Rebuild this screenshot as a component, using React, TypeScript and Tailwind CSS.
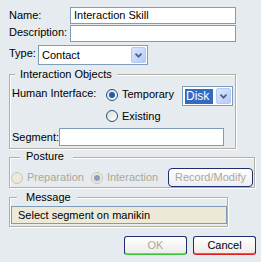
import React from "react";

function Chevron() {
  return (
    <svg width="15" height="16" viewBox="0 0 15 16">
      <path d="M4 6.5 L7.5 10 L11 6.5" fill="none" stroke="#4d6185" strokeWidth="2" />
    </svg>
  );
}

function DropBtn() {
  return (
    <div className="w-[15px] h-[16px] rounded-[2px] bg-gradient-to-br from-[#dbe6fd] to-[#b6cbf7] border border-[#b6c9f2] flex items-center justify-center">
      <Chevron />
    </div>
  );
}

function Radio({ checked, disabled, x }: { checked?: boolean; disabled?: boolean; x?: string }) {
  return (
    <div
      className={
        "w-[12px] h-[12px] rounded-full border flex items-center justify-center shrink-0 " +
        (disabled ? "border-[#c9c7ba] bg-[#ece9d8] " : "border-[#1c5180] bg-gradient-to-br from-[#dcdcd6] to-white ") +
        (x ?? "")
      }
    >
      {checked && (
        <div className={"w-[6px] h-[6px] rounded-full " + (disabled ? "bg-[#8a9bbf]" : "bg-[#2d58a8]")} />
      )}
    </div>
  );
}

function Group({
  legend,
  w,
  h,
  legendPos,
  children,
}: {
  legend: string;
  w: string;
  h: string;
  legendPos: string;
  children: React.ReactNode;
}) {
  return (
    <div
      className={
        "relative box-border border border-[#b3b0a3] shadow-[1px_1px_0_#fff,inset_1px_1px_0_#fff] " + w + " " + h
      }
    >
      <span className={"absolute -top-[7px] leading-[13px] bg-[#e5ebef] whitespace-nowrap " + legendPos}>{legend}</span>
      {children}
    </div>
  );
}

export default function App() {
  return (
    <div className="w-[261px] h-[262px] bg-[#e5ebef] text-[11px] leading-[13px] text-black font-['Liberation_Sans',Arial,sans-serif] overflow-hidden">
      <div className="flex flex-col pl-[9px] pt-[7px]">
        {/* Name */}
        <div className="flex items-center h-[17px]">
          <span className="w-[61px]">Name:</span>
          <div className="w-[166px] h-[17px] box-border border border-[#7f9db9] bg-white pl-[3px] flex items-center">
            Interaction Skill
          </div>
        </div>
        {/* Description */}
        <div className="flex items-center h-[17px] mt-[1px]">
          <span className="w-[61px] -mt-[2px]">Description:</span>
          <div className="w-[166px] h-[17px] box-border border border-[#7f9db9] bg-white" />
        </div>
        {/* Type */}
        <div className="flex items-start h-[20px] mt-[3px]">
          <span className="w-[29px] mt-[2px]">Type:</span>
          <div className="w-[110px] h-[20px] box-border border border-[#7f9db9] bg-white flex items-center pl-[3px] pr-[1px]">
            <span className="flex-1 mt-[1px]">Contact</span>
            <DropBtn />
          </div>
        </div>

        {/* Interaction Objects */}
        <div className="mt-[9px]">
          <Group legend="Interaction Objects" w="w-[227px]" h="h-[75px]" legendPos="left-[5px] px-[5px]">
            <div className="flex flex-col pl-[2px]">
              <div className="flex items-start h-[20px] mt-[11px]">
                <span className="w-[94px] mt-[1px] whitespace-nowrap">Human Interface:</span>
                <Radio checked x="mt-[3px]" />
                <span className="w-[60px] ml-[4px] mt-[2px]">Temporary</span>
                <div className="w-[51px] h-[20px] box-border border border-[#7f9db9] bg-white flex items-center pl-[2px] pr-[1px]">
                  <span className="w-[28px] h-[15px] bg-[#316ac5] text-white flex items-center pl-[1px] text-[12px]">Disk</span>
                  <div className="ml-auto">
                    <DropBtn />
                  </div>
                </div>
              </div>
              <div className="flex items-center h-[12px] mt-[4px]">
                <span className="w-[94px]" />
                <Radio />
                <span className="ml-[4px]">Existing</span>
              </div>
              <div className="flex items-center h-[18px] mt-[6px]">
                <span className="w-[47px]">Segment:</span>
                <div className="w-[165px] h-[18px] box-border border border-[#7f9db9] bg-white" />
              </div>
            </div>
          </Group>
        </div>

        {/* Posture */}
        <div className="mt-[8px]">
          <Group legend="Posture" w="w-[246px]" h="h-[31px]" legendPos="left-[10px] pl-[6px] pr-[9px] -top-[8px]">
            <div className="flex items-center h-[19px] mt-[10px] pl-[1px]">
              <Radio disabled />
              <span className="ml-[4px] text-[#aca899]">Preparation</span>
              <Radio disabled checked x="ml-[7px]" />
              <span className="ml-[4px] text-[#aca899]">Interaction</span>
              <div className="ml-auto mr-[1px] w-[85px] h-[19px] box-border border border-[#1f2f6e] rounded-[4px] bg-gradient-to-b from-white to-[#eeeef0] text-[#aca899] flex items-center justify-center">
                Record/Modify
              </div>
            </div>
          </Group>
        </div>

        {/* Message */}
        <div className="mt-[9px]">
          <Group legend="Message" w="w-[219px]" h="h-[30px]" legendPos="left-[7px] pl-[9px] pr-[6px]">
            <div className="mt-[8px] ml-[1px] w-[216px] h-[18px] box-border border border-[#7f9db9] bg-[#ece9d8] flex items-center pl-[6px]">
              Select segment on manikin
            </div>
          </Group>
        </div>

        {/* Buttons */}
        <div className="flex justify-end gap-[6px] pr-[5px] mt-[9px]">
          <div className="w-[63px] h-[19px] box-border border border-[#1f2f6e] border-b-[#3cc13c] rounded-[3px] bg-gradient-to-b from-white to-[#ecebe6] shadow-[inset_0_-1px_0_#7ad36d] text-[#aca899] flex items-center justify-center">
            OK
          </div>
          <div className="w-[63px] h-[19px] box-border border border-[#1f2f6e] border-b-[#e02020] rounded-[3px] bg-gradient-to-b from-white to-[#ecebe6] shadow-[inset_0_-1px_0_#f05050] flex items-center justify-center">
            Cancel
          </div>
        </div>
      </div>
    </div>
  );
}
